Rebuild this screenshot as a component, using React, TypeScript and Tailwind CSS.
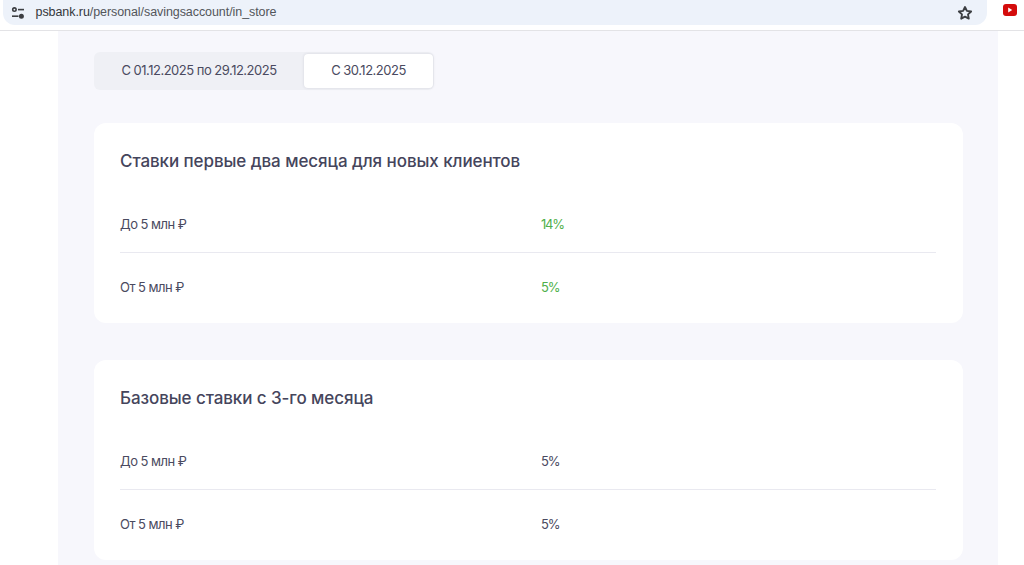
import React from "react";

function Row({ label, value, green, first }: { label: string; value: string; green?: boolean; first?: boolean }) {
  return (
    <div className={`flex items-center text-[13px] tracking-[-0.52px] text-[#4a4a60] ${first ? "h-[57px] pt-[1px] border-b border-[#e9e9f0]" : "h-[68px] pt-[2px]"}`}>
      <span className="w-[421px]">{label}</span>
      <span className={`tracking-[-1.2px] ${green ? "text-[#4fb04a]" : ""}`}>{value}</span>
    </div>
  );
}

function Card({ title, rows, className }: { title: string; rows: { label: string; value: string; green?: boolean }[]; className: string }) {
  return (
    <section className={`bg-white rounded-[12px] w-[869px] h-[200px] px-[26px] pt-[26px] ${className}`}>
      <h2 className="text-[17px] leading-[24px] font-medium tracking-[-0.08px] text-[#45455c] mb-[23px]">{title}</h2>
      <div className="w-[816px]">
        {rows.map((r, i) => (
          <Row key={r.label} {...r} first={i === 0} />
        ))}
      </div>
    </section>
  );
}

export default function App() {
  return (
    <div className="w-[1024px] h-[565px] overflow-hidden bg-white font-['Inter','Liberation_Sans',sans-serif]">
      <header className="h-[31px] border-b border-[#e3e3e6] flex items-start">
        <div className="ml-[3px] w-[984px] h-[25px] bg-[#edf2fa] rounded-b-[12px] flex items-center pl-[8px] pr-[14px]">
          <svg width="14" height="14" viewBox="0 0 14 14" fill="none" stroke="#3c3e42" strokeWidth="1.6">
            <circle cx="3.4" cy="3.6" r="1.7" />
            <path d="M7 3.6h6" />
            <circle cx="10.4" cy="10.2" r="1.7" fill="#3c3e42" />
            <path d="M1 10.2h6.5" />
          </svg>
          <span className="ml-[10.5px] text-[12.5px] tracking-[-0.07px] font-['Liberation_Sans',sans-serif] text-[#33363b]">
            psbank.ru<span className="text-[#53565b]">/personal/savingsaccount/in_store</span>
          </span>
          <svg className="ml-auto" width="16" height="16" viewBox="0 0 24 24" fill="none" stroke="#3c3e42" strokeWidth="2.8" strokeLinejoin="round">
            <path d="M12 3l2.8 5.9 6.4.8-4.7 4.4 1.2 6.4L12 17.4l-5.7 3.1 1.2-6.4-4.7-4.4 6.4-.8z" />
          </svg>
        </div>
        <svg className="ml-[16px] mt-[4px]" width="14" height="12" viewBox="0 0 14 12">
          <rect width="14" height="12" rx="3" fill="#d40c0c" />
          <path d="M5.2 3.6v4.8l4-2.4z" fill="#fff" />
        </svg>
      </header>
      <main className="ml-[58px] w-[940px] h-[534px] bg-[#f7f7fc] pl-[36px] pt-[21px]">
        <div className="w-[340px] h-[38px] rounded-[6px] bg-[#eff0f5] flex items-center text-[13px] tracking-[-0.5px] text-[#4a4a60]">
          <div className="w-[210px] text-center">С 01.12.2025 по 29.12.2025</div>
          <div className="w-[129px] h-[34px] rounded-[4px] bg-white shadow-[0_0_3px_rgba(60,60,90,0.15)] flex items-center justify-center">С 30.12.2025</div>
        </div>
        <Card
          className="mt-[33px]"
          title="Ставки первые два месяца для новых клиентов"
          rows={[
            { label: "До 5 млн ₽", value: "14%", green: true },
            { label: "От 5 млн ₽", value: "5%", green: true },
          ]}
        />
        <Card
          className="mt-[37px]"
          title="Базовые ставки с 3-го месяца"
          rows={[
            { label: "До 5 млн ₽", value: "5%" },
            { label: "От 5 млн ₽", value: "5%" },
          ]}
        />
      </main>
    </div>
  );
}
